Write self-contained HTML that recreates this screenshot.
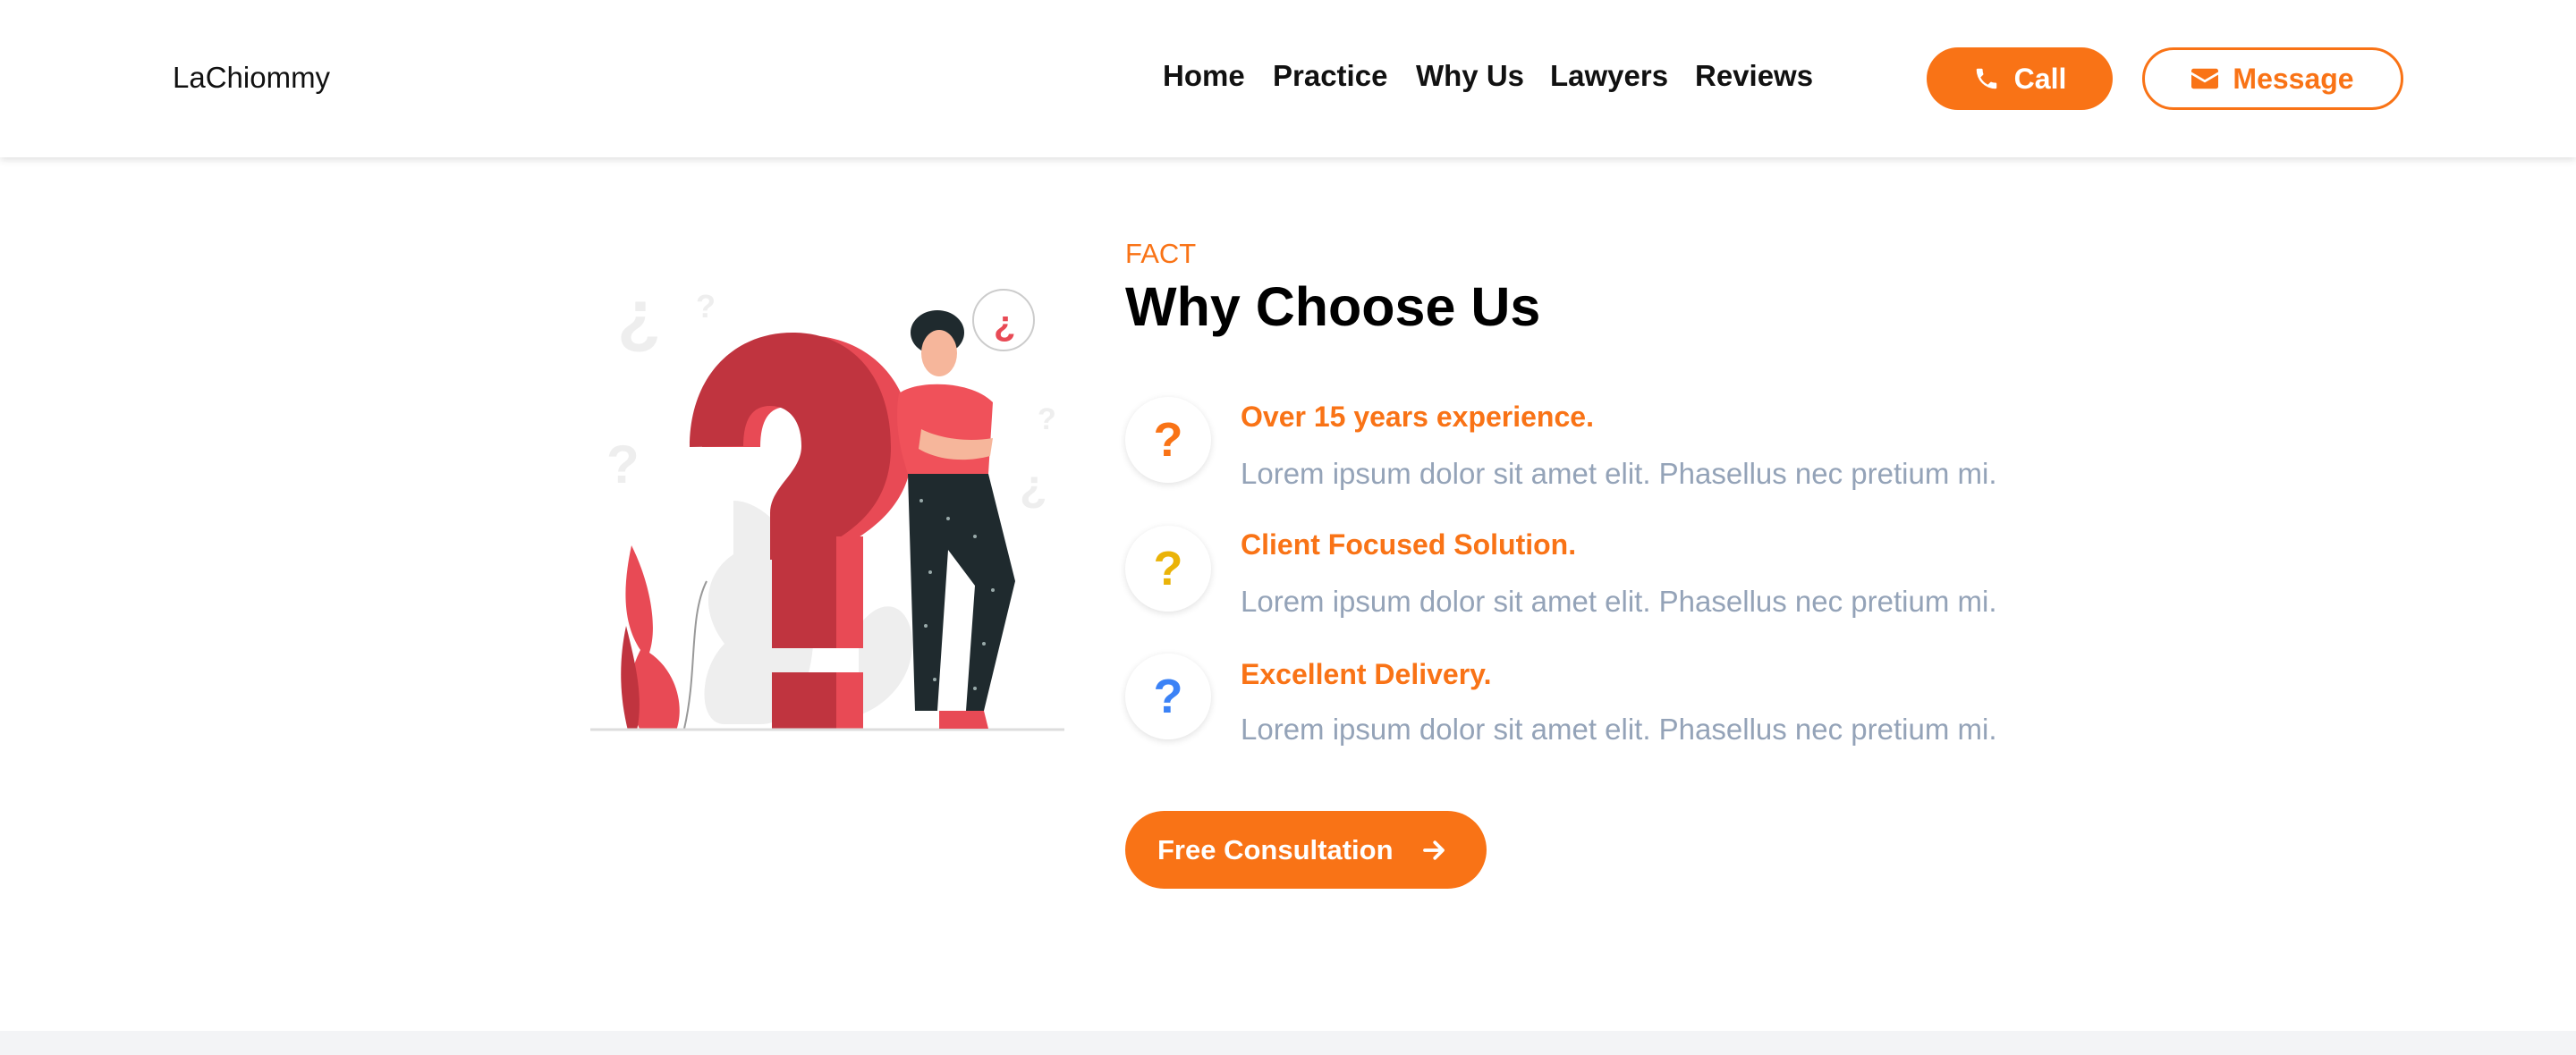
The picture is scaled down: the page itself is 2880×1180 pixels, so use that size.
<!DOCTYPE html>
<html><head><meta charset="utf-8"><style>
*{margin:0;padding:0;box-sizing:border-box}
body{width:2880px;height:1180px;background:#fff;font-family:"Liberation Sans",sans-serif;position:relative;overflow:hidden}
.hdr{position:absolute;left:0;top:0;width:2880px;height:176px;background:#fff;box-shadow:0 3px 8px rgba(0,0,0,.12)}
.logo{position:absolute;left:193px;top:68px;font-size:33px;color:#111}
.nav{position:absolute;top:66px;font-size:33px;font-weight:bold;color:#111}
.btn{position:absolute;top:53px;height:70px;border-radius:35px;font-size:32px;font-weight:bold;display:flex;align-items:center;justify-content:center;gap:16px}
.call{left:2154px;width:208px;background:#f97316;color:#fff}
.msg{left:2395px;width:292px;border:3px solid #f97316;color:#f97316}
.fact{position:absolute;left:1258px;top:266px;font-size:31px;color:#f97316}
h1{position:absolute;left:1258px;top:308px;font-size:61px;font-weight:bold;color:#000}
.ic{position:absolute;left:1258px;width:96px;height:96px;border-radius:50%;background:#fff;box-shadow:0 2px 8px rgba(0,0,0,.12);display:flex;align-items:center;justify-content:center;font-size:54px;font-weight:bold}
.t{position:absolute;left:1387px;font-size:32px;font-weight:bold;color:#f97316}
.d{position:absolute;left:1387px;font-size:33px;color:#94a3b8;white-space:nowrap}
.cta{position:absolute;left:1258px;top:907px;width:404px;height:87px;border-radius:44px;background:#f97316;color:#fff;font-size:31px;font-weight:bold;display:flex;align-items:center;padding-left:36px;gap:30px}
.foot{position:absolute;left:0;top:1153px;width:2880px;height:27px;background:#f3f4f6}
</style></head><body>
<div class="hdr">
<div class="logo">LaChiommy</div>
<div class="nav" style="left:1300px">Home</div>
<div class="nav" style="left:1423px">Practice</div>
<div class="nav" style="left:1583px">Why Us</div>
<div class="nav" style="left:1733px">Lawyers</div>
<div class="nav" style="left:1895px">Reviews</div>
<div class="btn call"><svg width="30" height="30" viewBox="0 0 24 24"><path fill="#fff" d="M6.6 10.8a15 15 0 006.6 6.6l2.2-2.2c.3-.3.7-.4 1-.2 1.1.4 2.3.6 3.6.6.6 0 1 .4 1 1V20c0 .6-.4 1-1 1A17 17 0 013 4c0-.6.4-1 1-1h3.5c.6 0 1 .4 1 1 0 1.3.2 2.5.6 3.6.1.3 0 .7-.2 1z"/></svg>Call</div>
<div class="btn msg"><svg width="30" height="26" viewBox="0 0 24 20"><path fill="#f97316" d="M2 1h20a2 2 0 012 2v1l-12 7L0 4V3a2 2 0 012-2zM0 6.5l12 7 12-7V17a2 2 0 01-2 2H2a2 2 0 01-2-2z"/></svg>Message</div>
</div>

<svg style="position:absolute;left:640px;top:290px" width="560" height="540" viewBox="640 290 560 540">
<g font-family="Liberation Sans" font-weight="bold">
<text x="690" y="380" font-size="80" fill="#eee">¿</text>
<text x="778" y="355" font-size="36" fill="#eee">?</text>
<text x="678" y="540" font-size="60" fill="#eee">?</text>
<text x="1140" y="560" font-size="50" fill="#eee">¿</text>
<text x="1160" y="480" font-size="34" fill="#eee">?</text>
<path d="M820 560c40 0 90 60 90 140 0 60-20 110-60 110h-40c-30 0-30-60 0-90-30-40-20-80 10-100z" fill="#eeeeee"/>
<path d="M960 700c30-40 60-20 60 20s-30 70-60 80z" fill="#eeeeee"/>
</g>
<path d="M785 500c0-80 50-125 115-125s120 45 120 125c0 60-40 90-75 110v25h-70v-60c0-30 40-45 40-75 0-30-15-45-35-45s-30 15-30 45z" fill="#e84a55"/>
<path d="M771 500c0-80 50-128 115-128s110 48 110 128c0 60-35 88-65 106v20h-70v-52c0-30 35-45 35-75 0-30-15-45-35-45s-30 15-30 45z" fill="#c0343f"/>
<rect x="863" y="600" width="101" height="125" fill="#c0343f"/>
<rect x="935" y="600" width="30" height="125" fill="#e84a55"/>
<rect x="863" y="752" width="101" height="65" fill="#c0343f"/>
<rect x="935" y="752" width="30" height="65" fill="#e84a55"/>
<path d="M706 610c20 40 30 90 20 120 30 20 40 60 30 87h-40c-20-40-10-70 0-90-20-30-20-70-10-117z" fill="#e84a55"/>
<path d="M700 700c10 40 20 80 12 117h-10c-10-40-10-80-2-117z" fill="#c0343f"/>
<path d="M790 650c-20 40-10 100-25 165" stroke="#999" stroke-width="2" fill="none"/>
<line x1="660" y1="816" x2="1190" y2="816" stroke="#ddd" stroke-width="3"/>
<circle cx="1122" cy="358" r="34" fill="#fff" stroke="#ccc" stroke-width="2"/>
<text x="1111" y="375" font-size="40" fill="#e84a55" font-family="Liberation Sans" font-weight="bold">¿</text>
<ellipse cx="1048" cy="372" rx="30" ry="25" fill="#1f2a2e"/>
<ellipse cx="1050" cy="395" rx="20" ry="26" fill="#f6b69b"/>
<path d="M1005 440c20-15 80-15 105 10l-5 80h-90c-10-30-15-60-10-90z" fill="#f0515a"/>
<path d="M1030 480c20 10 50 15 80 10l-3 20c-30 8-60 4-80-8z" fill="#f6b69b"/>
<path d="M1015 530h90l30 120-35 145h-20l10-140-30-40-12 180h-25z" fill="#1f2a2e"/>
<g fill="#9aa" ><circle cx="1030" cy="560" r="2"/><circle cx="1060" cy="580" r="2"/><circle cx="1090" cy="600" r="2"/><circle cx="1040" cy="640" r="2"/><circle cx="1110" cy="660" r="2"/><circle cx="1035" cy="700" r="2"/><circle cx="1100" cy="720" r="2"/><circle cx="1045" cy="760" r="2"/><circle cx="1090" cy="770" r="2"/></g>
<path d="M1050 795h50l5 20h-55z" fill="#e84a55"/>
</svg>

<div class="fact">FACT</div>
<h1>Why Choose Us</h1>
<div class="ic" style="top:444px;color:#f97316">?</div>
<div class="ic" style="top:588px;color:#eab308">?</div>
<div class="ic" style="top:731px;color:#3b82f6">?</div>
<div class="t" style="top:448px">Over 15 years experience.</div>
<div class="d" style="top:511px">Lorem ipsum dolor sit amet elit. Phasellus nec pretium mi.</div>
<div class="t" style="top:591px">Client Focused Solution.</div>
<div class="d" style="top:654px">Lorem ipsum dolor sit amet elit. Phasellus nec pretium mi.</div>
<div class="t" style="top:736px">Excellent Delivery.</div>
<div class="d" style="top:797px">Lorem ipsum dolor sit amet elit. Phasellus nec pretium mi.</div>
<div class="cta">Free Consultation <svg width="30" height="30" viewBox="0 0 24 24"><path d="M4 12h15M13 5l7 7-7 7" stroke="#fff" stroke-width="3" fill="none" stroke-linecap="round" stroke-linejoin="round"/></svg></div>
<div class="foot"></div>
</body></html>
